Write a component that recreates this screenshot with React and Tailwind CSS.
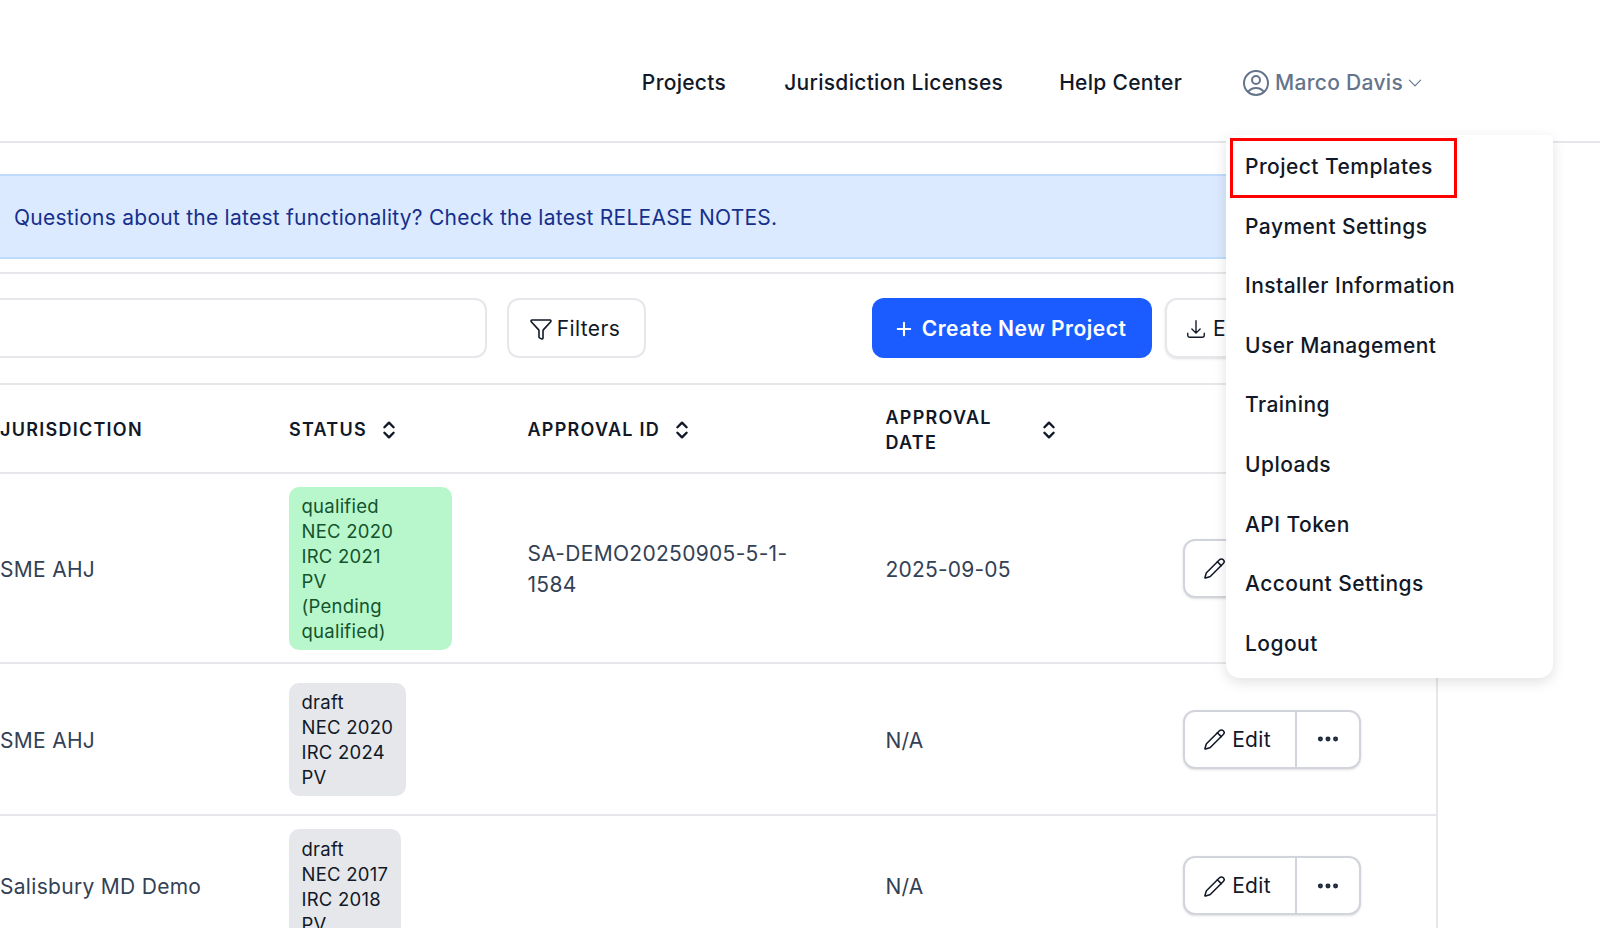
import { ChevronsUpDown, Ellipsis, Funnel, Pencil } from "lucide-react";
import { HiOutlineArrowDownTray, HiOutlineChevronDown, HiOutlinePlus, HiOutlineUserCircle } from "react-icons/hi2";

const menuItems = [
  "Project Templates",
  "Payment Settings",
  "Installer Information",
  "User Management",
  "Training",
  "Uploads",
  "API Token",
  "Account Settings",
  "Logout",
];

const gridCols = "grid grid-cols-[289px_238.5px_358px_297.5px_254px] items-center";

function SortIcon() {
  return <ChevronsUpDown size={22} strokeWidth={2.6} className="text-gray-900 shrink-0" />;
}

function Badge({ lines, tone, width }) {
  const toneClass = tone === "green" ? "bg-[#b7f7cb] text-[#14532d]" : "bg-[#e5e7eb] text-[#111827]";
  return (
    <div className={`inline-block rounded-[10px] pb-[5.5px] pl-[12.5px] pr-[12.5px] pt-[7.5px] text-[18.5px] leading-[25px] tracking-[0.25px] ${toneClass} ${width}`}>
      {lines.map((line) => (
        <div key={line}>{line}</div>
      ))}
    </div>
  );
}

function RowActions() {
  return (
    <div className="flex h-[59px] w-[178px] rounded-[12px] border-2 border-[#d1d5db] bg-white text-[21px] tracking-[0.3px] text-[#111827] shadow-sm">
      <div className="flex w-[112px] items-center justify-center gap-[6px] border-r-2 border-[#d1d5db] pr-[6px] pt-[1px]">
        <Pencil size={23} strokeWidth={1.6} />
        Edit
      </div>
      <div className="flex flex-1 items-center justify-center">
        <Ellipsis size={26} strokeWidth={2.6} className="text-[#1e293b]" />
      </div>
    </div>
  );
}

function Row({ height, name, lines, tone, badgeWidth, approvalId, date }) {
  return (
    <div className={`${gridCols} ${height} border-b-2 border-[#e5e7eb] text-[21px] tracking-[0.3px] text-[#334155]`}>
      <div className="pt-[3px]">{name}</div>
      <div>
        <Badge lines={lines} tone={tone} width={badgeWidth} />
      </div>
      <div className="pt-[2px] leading-[31.5px]">{approvalId}</div>
      <div className="pt-[3px] tracking-[0.2px]">{date}</div>
      <RowActions />
    </div>
  );
}

export default function App() {
  return (
    <div className="relative h-[928px] overflow-hidden bg-white font-['Inter',sans-serif]">
      {/* Header */}
      <header className="flex h-[143px] items-center justify-end gap-[56px] border-b-2 border-[#e5e7eb] pr-[176px] pt-[24px] text-[21px] font-medium tracking-[0.3px] text-[#111827]">
        <span className="mr-[2px]">Projects</span>
        <span>Jurisdiction Licenses</span>
        <span>Help Center</span>
        <div className="ml-[2px] flex items-center gap-[3px] text-[#64748b]">
          <HiOutlineUserCircle size={32} className="text-[#64748b]" />
          <span>Marco Davis</span>
          <HiOutlineChevronDown size={18} />
        </div>
      </header>

      {/* Main */}
      <main className="w-[1438px] border-r-2 border-[#e5e7eb]">
        <div className="pt-[31px]">
          <div className="flex h-[85px] items-center border-y-2 border-[#bfdbfe] bg-[#dbeafe] px-[14px] pt-[2px] text-[21px] tracking-[0.25px] text-[#172f8c]">
            Questions about the latest functionality? Check the latest RELEASE NOTES.
          </div>
        </div>

        <div className="mt-[13px] flex h-[113px] items-center border-y-2 border-[#e5e7eb] pb-[2px]">
          <div className="h-[60px] w-[487px] rounded-r-[12px] border-2 border-l-0 border-[#e5e7eb]" />
          <button className="ml-[20px] flex h-[60px] w-[139px] items-center justify-center gap-[4px] rounded-[12px] border-2 border-[#e5e7eb] pr-[4px] pt-[2px] text-[21px] tracking-[0.4px] text-[#111827]">
            <Funnel size={24} strokeWidth={1.6} />
            Filters
          </button>
          <button className="ml-[226px] flex h-[60px] w-[280px] items-center justify-center gap-[8px] rounded-[12px] bg-[#1a5cff] pr-[4px] pt-[2px] text-[21px] font-semibold tracking-[0.5px] text-white">
            <HiOutlinePlus size={20} strokeWidth={2.5} />
            Create New Project
          </button>
          <button className="ml-[13px] flex h-[60px] w-[160px] items-center gap-[6px] rounded-[12px] border-2 border-[#e5e7eb] pl-[18px] pt-[2px] text-[21px] tracking-[0.3px] text-[#111827] shadow-sm">
            <HiOutlineArrowDownTray size={22} />
            Export
          </button>
        </div>

        {/* Table */}
        <div className={`${gridCols} h-[89px] border-b-2 border-[#e5e7eb] pt-[2px] text-[18px] font-semibold uppercase leading-[25px] tracking-[0.07em] text-[#111827]`}>
          <div>Jurisdiction</div>
          <div className="flex items-center gap-[11px]">
            Status
            <SortIcon />
          </div>
          <div className="flex items-center gap-[11px]">
            Approval ID
            <SortIcon />
          </div>
          <div className="flex items-center">
            <div className="w-[152px]">Approval Date</div>
            <SortIcon />
          </div>
          <div />
        </div>

        <Row
          height="h-[190px]"
          name="SME AHJ"
          lines={["qualified", "NEC 2020", "IRC 2021", "PV", "(Pending", "qualified)"]}
          tone="green"
          badgeWidth="w-[163px]"
          approvalId={
            <>
              SA-DEMO20250905-5-1-
              <br />
              1584
            </>
          }
          date="2025-09-05"
        />
        <Row height="h-[152px]" name="SME AHJ" lines={["draft", "NEC 2020", "IRC 2024", "PV"]} date="N/A" />
        <Row height="h-[141px]" name="Salisbury MD Demo" lines={["draft", "NEC 2017", "IRC 2018", "PV"]} date="N/A" />
      </main>

      {/* User dropdown */}
      <div className="absolute left-[1226px] top-[135px] h-[543px] w-[327px] rounded-b-[14px] rounded-t-[6px] bg-white pt-[2px] shadow-[0_4px_14px_rgba(0,0,0,0.12)]">
        {menuItems.map((item) => (
          <div key={item} className="flex h-[59.6px] items-center pl-[19px] text-[21px] font-[450] tracking-[0.45px] text-[#111827]">
            {item}
          </div>
        ))}
        <div className="absolute left-[4px] top-[3px] h-[60px] w-[227px] border-[3px] border-[#ff0000]" />
      </div>
    </div>
  );
}
